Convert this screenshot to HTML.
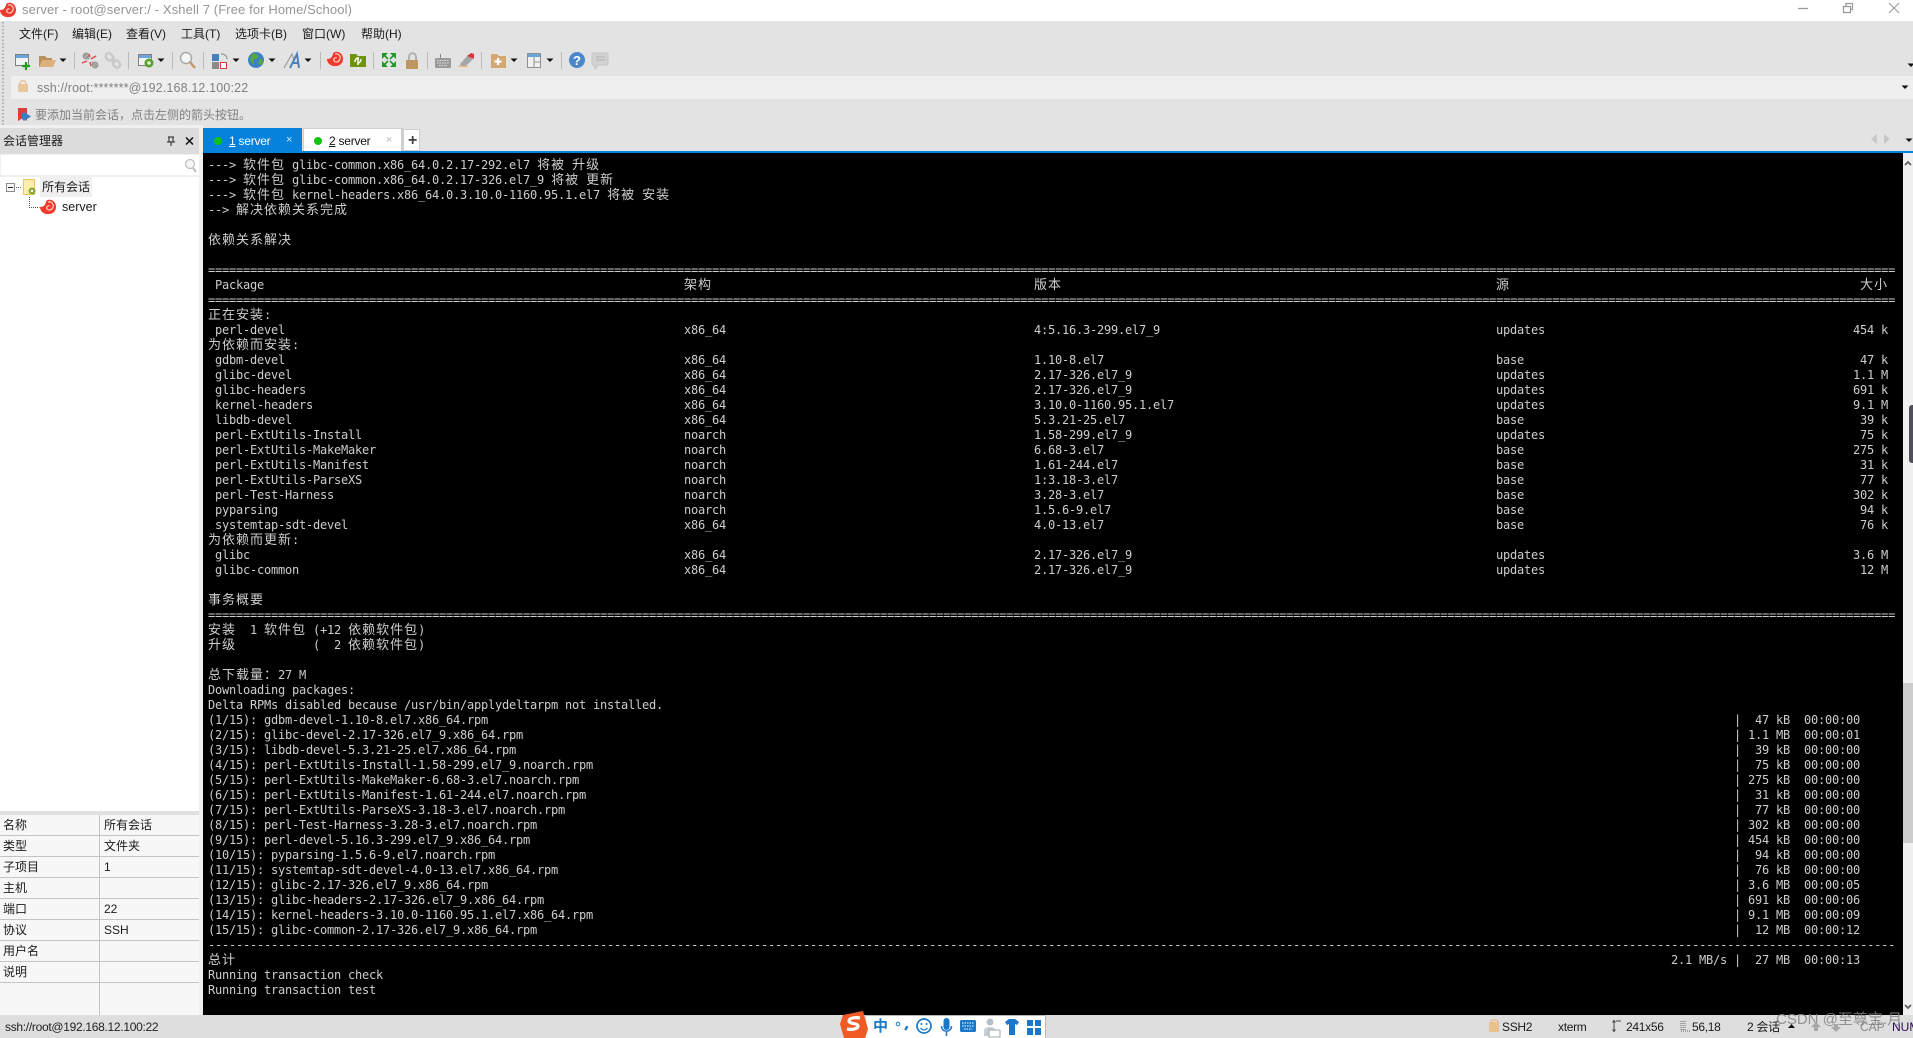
<!DOCTYPE html>
<html lang="zh"><head><meta charset="utf-8"><title>Xshell 7</title>
<style>
html,body{margin:0;padding:0;background:#e3e3e3}
body{width:1913px;height:1038px;position:relative;overflow:hidden;font:12px/16px "Liberation Sans","Noto Sans CJK SC",sans-serif;color:#1a1a1a}
.b{position:absolute}
.t{position:absolute;white-space:pre;line-height:16px}
.st{letter-spacing:-.3px}
#term{position:absolute;left:203px;top:153px;width:1700px;height:862px;background:#000;overflow:hidden}
#rows{position:absolute;left:5px;top:5px;width:1687px;font:12px/15px "DejaVu Sans Mono",monospace;letter-spacing:-.224px;color:#cdcdcd}
.r{position:relative;height:15px;white-space:pre;width:1687px}
.e{overflow:hidden}
.r i{font:13px/0 "Noto Sans CJK SC",sans-serif;letter-spacing:1px}
.r span{position:absolute;top:0}
.a{left:476px}.v{left:826px}.s{left:1288px}.z{right:7px}.p{left:1526px}
.kv{position:absolute;left:0;width:199px;height:20px;border-bottom:1px solid #c4c4c4;background:#f7f7f7}
.kv b{position:absolute;font-weight:normal;left:3px;top:2px}
.kv em{position:absolute;font-style:normal;left:104px;top:2px}
</style></head><body>
<!-- title bar -->
<div class="b" style="left:0;top:0;width:1913px;height:21px;background:#fff"></div>
<div class="t" style="left:22px;top:2px;font-size:13px;letter-spacing:.11px;color:#959595">server - root@server:/ - Xshell 7 (Free for Home/School)</div>
<!-- menu -->
<div class="t" style="left:19px;top:26px">文件(F)</div>
<div class="t" style="left:72px;top:26px">编辑(E)</div>
<div class="t" style="left:126px;top:26px">查看(V)</div>
<div class="t" style="left:181px;top:26px">工具(T)</div>
<div class="t" style="left:235px;top:26px">选项卡(B)</div>
<div class="t" style="left:302px;top:26px">窗口(W)</div>
<div class="t" style="left:361px;top:26px">帮助(H)</div>
<!-- address -->
<div class="b" style="left:11px;top:76px;width:1902px;height:23px;background:#efefef"></div>
<div class="t" style="left:37px;top:80px;font-size:12.5px;letter-spacing:.15px;color:#808080">ssh://root:*******@192.168.12.100:22</div>
<div class="t" style="left:35px;top:107px;color:#808080">要添加当前会话，点击左侧的箭头按钮。</div>
<!-- sidebar -->
<div class="b" style="left:0;top:125px;width:203px;height:890px;background:#f0f0f0"></div>
<div class="b" style="left:0;top:128px;width:199px;height:26px;background:#dcdcdc"></div>
<div class="t" style="left:3px;top:133px">会话管理器</div>
<div class="b" style="left:1px;top:155px;width:198px;height:20px;background:#fff"></div>
<div class="b" style="left:0;top:177px;width:199px;height:634px;background:#fff"></div>
<div class="b" style="left:40px;top:177px;width:52px;height:20px;background:#f0f0f0"></div>
<div class="t" style="left:42px;top:179px">所有会话</div>
<div class="t" style="left:62px;top:199px;font-size:12.5px">server</div>
<!-- properties -->
<div class="b" style="left:0;top:811px;width:199px;height:4px;background:#e0e0e0"></div>
<div class="b" style="left:0;top:815px;width:199px;height:200px;background:#f7f7f7"></div>
<div class="kv" style="top:815px"><b>名称</b><em>所有会话</em></div>
<div class="kv" style="top:836px"><b>类型</b><em>文件夹</em></div>
<div class="kv" style="top:857px"><b>子项目</b><em>1</em></div>
<div class="kv" style="top:878px"><b>主机</b></div>
<div class="kv" style="top:899px"><b>端口</b><em>22</em></div>
<div class="kv" style="top:920px"><b>协议</b><em>SSH</em></div>
<div class="kv" style="top:941px"><b>用户名</b></div>
<div class="kv" style="top:962px"><b>说明</b></div>
<div class="b" style="left:99px;top:815px;width:1px;height:200px;background:#c4c4c4"></div>
<!-- tabs -->
<div class="b" style="left:203px;top:128px;width:99px;height:23px;background:#0681dc"></div>
<div class="b" style="left:303px;top:128px;width:97px;height:22px;background:#fff;border:solid #cfcfcf;border-width:1px 2px 1px 1px"></div>
<div class="b" style="left:403px;top:129px;width:15px;height:20px;background:#fff;border:1px solid #cfcfcf"></div>
<div class="t" style="left:229px;top:133px;color:#fff;letter-spacing:-.25px"><u>1</u> server</div>
<div class="t" style="left:329px;top:133px;color:#111;letter-spacing:-.25px"><u>2</u> server</div>
<div class="t" style="left:286px;top:132px;color:#cfe6f8;font-size:11px">×</div>
<div class="t" style="left:386px;top:132px;color:#bdbdbd;font-size:11px">×</div>
<div class="t" style="left:408px;top:133px;color:#444;font-size:16px;font-weight:bold">+</div>
<div class="b" style="left:203px;top:151px;width:1710px;height:2px;background:#0681dc"></div>
<!-- terminal -->
<div id="term"><div id="rows">
<div class="r">---&gt; <i>软件包</i> glibc-common.x86_64.0.2.17-292.el7 <i>将被</i> <i>升级</i></div>
<div class="r">---&gt; <i>软件包</i> glibc-common.x86_64.0.2.17-326.el7_9 <i>将被</i> <i>更新</i></div>
<div class="r">---&gt; <i>软件包</i> kernel-headers.x86_64.0.3.10.0-1160.95.1.el7 <i>将被</i> <i>安装</i></div>
<div class="r">--&gt; <i>解决依赖关系完成</i></div>
<div class="r"></div>
<div class="r"><i>依赖关系解决</i></div>
<div class="r"></div>
<div class="r e">==================================================================================================================================================================================================================================================================</div>
<div class="r"> Package<span class="a"><i>架构</i></span><span class="v"><i>版本</i></span><span class="s"><i>源</i></span><span class="z"><i>大小</i></span></div>
<div class="r e">==================================================================================================================================================================================================================================================================</div>
<div class="r"><i>正在安装</i>:</div>
<div class="r"> perl-devel<span class="a">x86_64</span><span class="v">4:5.16.3-299.el7_9</span><span class="s">updates</span><span class="z">454 k</span></div>
<div class="r"><i>为依赖而安装</i>:</div>
<div class="r"> gdbm-devel<span class="a">x86_64</span><span class="v">1.10-8.el7</span><span class="s">base</span><span class="z">47 k</span></div>
<div class="r"> glibc-devel<span class="a">x86_64</span><span class="v">2.17-326.el7_9</span><span class="s">updates</span><span class="z">1.1 M</span></div>
<div class="r"> glibc-headers<span class="a">x86_64</span><span class="v">2.17-326.el7_9</span><span class="s">updates</span><span class="z">691 k</span></div>
<div class="r"> kernel-headers<span class="a">x86_64</span><span class="v">3.10.0-1160.95.1.el7</span><span class="s">updates</span><span class="z">9.1 M</span></div>
<div class="r"> libdb-devel<span class="a">x86_64</span><span class="v">5.3.21-25.el7</span><span class="s">base</span><span class="z">39 k</span></div>
<div class="r"> perl-ExtUtils-Install<span class="a">noarch</span><span class="v">1.58-299.el7_9</span><span class="s">updates</span><span class="z">75 k</span></div>
<div class="r"> perl-ExtUtils-MakeMaker<span class="a">noarch</span><span class="v">6.68-3.el7</span><span class="s">base</span><span class="z">275 k</span></div>
<div class="r"> perl-ExtUtils-Manifest<span class="a">noarch</span><span class="v">1.61-244.el7</span><span class="s">base</span><span class="z">31 k</span></div>
<div class="r"> perl-ExtUtils-ParseXS<span class="a">noarch</span><span class="v">1:3.18-3.el7</span><span class="s">base</span><span class="z">77 k</span></div>
<div class="r"> perl-Test-Harness<span class="a">noarch</span><span class="v">3.28-3.el7</span><span class="s">base</span><span class="z">302 k</span></div>
<div class="r"> pyparsing<span class="a">noarch</span><span class="v">1.5.6-9.el7</span><span class="s">base</span><span class="z">94 k</span></div>
<div class="r"> systemtap-sdt-devel<span class="a">x86_64</span><span class="v">4.0-13.el7</span><span class="s">base</span><span class="z">76 k</span></div>
<div class="r"><i>为依赖而更新</i>:</div>
<div class="r"> glibc<span class="a">x86_64</span><span class="v">2.17-326.el7_9</span><span class="s">updates</span><span class="z">3.6 M</span></div>
<div class="r"> glibc-common<span class="a">x86_64</span><span class="v">2.17-326.el7_9</span><span class="s">updates</span><span class="z">12 M</span></div>
<div class="r"></div>
<div class="r"><i>事务概要</i></div>
<div class="r e">==================================================================================================================================================================================================================================================================</div>
<div class="r"><i>安装</i>  1 <i>软件包</i> (+12 <i>依赖软件包</i>)</div>
<div class="r"><i>升级</i>           (  2 <i>依赖软件包</i>)</div>
<div class="r"></div>
<div class="r"><i>总下载量：</i>27 M</div>
<div class="r">Downloading packages:</div>
<div class="r">Delta RPMs disabled because /usr/bin/applydeltarpm not installed.</div>
<div class="r">(1/15): gdbm-devel-1.10-8.el7.x86_64.rpm<span class="p">|  47 kB  00:00:00</span></div>
<div class="r">(2/15): glibc-devel-2.17-326.el7_9.x86_64.rpm<span class="p">| 1.1 MB  00:00:01</span></div>
<div class="r">(3/15): libdb-devel-5.3.21-25.el7.x86_64.rpm<span class="p">|  39 kB  00:00:00</span></div>
<div class="r">(4/15): perl-ExtUtils-Install-1.58-299.el7_9.noarch.rpm<span class="p">|  75 kB  00:00:00</span></div>
<div class="r">(5/15): perl-ExtUtils-MakeMaker-6.68-3.el7.noarch.rpm<span class="p">| 275 kB  00:00:00</span></div>
<div class="r">(6/15): perl-ExtUtils-Manifest-1.61-244.el7.noarch.rpm<span class="p">|  31 kB  00:00:00</span></div>
<div class="r">(7/15): perl-ExtUtils-ParseXS-3.18-3.el7.noarch.rpm<span class="p">|  77 kB  00:00:00</span></div>
<div class="r">(8/15): perl-Test-Harness-3.28-3.el7.noarch.rpm<span class="p">| 302 kB  00:00:00</span></div>
<div class="r">(9/15): perl-devel-5.16.3-299.el7_9.x86_64.rpm<span class="p">| 454 kB  00:00:00</span></div>
<div class="r">(10/15): pyparsing-1.5.6-9.el7.noarch.rpm<span class="p">|  94 kB  00:00:00</span></div>
<div class="r">(11/15): systemtap-sdt-devel-4.0-13.el7.x86_64.rpm<span class="p">|  76 kB  00:00:00</span></div>
<div class="r">(12/15): glibc-2.17-326.el7_9.x86_64.rpm<span class="p">| 3.6 MB  00:00:05</span></div>
<div class="r">(13/15): glibc-headers-2.17-326.el7_9.x86_64.rpm<span class="p">| 691 kB  00:00:06</span></div>
<div class="r">(14/15): kernel-headers-3.10.0-1160.95.1.el7.x86_64.rpm<span class="p">| 9.1 MB  00:00:09</span></div>
<div class="r">(15/15): glibc-common-2.17-326.el7_9.x86_64.rpm<span class="p">|  12 MB  00:00:12</span></div>
<div class="r e">------------------------------------------------------------------------------------------------------------------------------------------------------------------------------------------------------------------------------------------------------------------</div>
<div class="r"><i>总计</i><span style="left:1463px">2.1 MB/s |  27 MB  00:00:13</span></div>
<div class="r">Running transaction check</div>
<div class="r">Running transaction test</div>
</div></div>
<!-- scrollbar -->
<div class="b" style="left:1903px;top:153px;width:10px;height:862px;background:#f0f0f0"></div>
<div class="b" style="left:1903px;top:683px;width:10px;height:160px;background:#cdcdcd"></div>
<div class="b" style="left:1909px;top:405px;width:4px;height:58px;background:#50505a;border-radius:3px 0 0 3px"></div>
<!-- status bar -->
<div class="b" style="left:0;top:1015px;width:1913px;height:23px;background:#dedede"></div>
<div class="t st" style="left:5px;top:1019px;color:#222">ssh://root@192.168.12.100:22</div>
<div class="t st" style="left:1502px;top:1019px">SSH2</div>
<div class="t st" style="left:1558px;top:1019px">xterm</div>
<div class="t st" style="left:1626px;top:1019px">241x56</div>
<div class="t st" style="left:1692px;top:1019px">56,18</div>
<div class="t st" style="left:1747px;top:1019px">2 会话</div>
<div class="t" style="left:1860px;top:1019px;color:#8a8a8a">CAP</div>
<div class="t" style="left:1892px;top:1019px;color:#2a0a50">NUM</div>
<div class="t" style="left:1776px;top:1010px;font-size:15px;line-height:20px;color:rgba(130,130,130,.85)">CSDN @至尊宝.月</div>
<!-- IME -->
<div class="b" style="left:866px;top:1015px;width:179px;height:22px;background:#fff;border:solid #b8b8b8;border-width:1px 1px 0 0"></div>
<div class="t" style="left:873px;top:1019px;font-size:15px;color:#1a78c8;font-weight:bold">中</div>
<!-- icons -->
<svg class="b" style="left:0;top:0" width="1913" height="1038" viewBox="0 0 1913 1038" xmlns="http://www.w3.org/2000/svg">
<defs><g id="caret"><path d="M-3.500-1.500h7L0 2z" fill="#111"/></g>
<g id="swirl"><path d="M16 8C16 3 12 0 8 1 7 1 6 2 6 3 5 6 4 8 0 8 0 12 4 16 9 15 13 15 16 12 16 8z" fill="#ee3b2d"/><path d="M8 3C11 2 14 5 13 8 12 11 9 12 7 10 6 8 8 6 9.500 7" fill="none" stroke="#fbd2cc" stroke-width="1.200"/></g></defs>
<!-- title logo -->
<use href="#swirl" x="0" y="2"/>
<!-- window buttons -->
<path d="M1798 8.500h10" stroke="#999" stroke-width="1.300"/>
<path d="M1843.500 6.500h7v6h-7zM1846 6.500v-3h6.500v6h-2" fill="none" stroke="#999" stroke-width="1.200"/>
<path d="M1889 3l10 10M1899 3l-10 10" stroke="#999" stroke-width="1"/>
<!-- grip -->
<path d="M3 22V125" stroke="#b0b0b0" stroke-width="2" stroke-dasharray="1.500 2"/>
<!-- separators -->
<g stroke="#bcbcbc" stroke-width="1"><path d="M74.500 52v17M128.500 52v17M172.500 52v17M203.500 52v17M320.500 52v17M373.500 52v17M427.500 52v17M481.500 52v17M561.500 52v17"/></g>
<!-- new session -->
<rect x="15.500" y="54.500" width="13" height="11" fill="#f2f2f2" stroke="#808080"/><rect x="16" y="55" width="12" height="3" fill="#6ba4dc"/><path d="M26 62v8M22 66h8" stroke="#1ea01e" stroke-width="2.200"/>
<!-- open folder -->
<path d="M39 56h6l2 2h5v2H44l-3 7h-2z" fill="#b98f5a"/><path d="M42 60h14l-3 7H39z" fill="#dbb07c"/>
<use href="#caret" x="63" y="60"/>
<!-- disconnect -->
<g fill="none" stroke="#9c9c9c" stroke-width="2"><path d="M84 54l5 5M92 62l5 5"/><circle cx="86" cy="56" r="2.500"/><circle cx="95" cy="65" r="2.500"/></g><path d="M82 63l5-2M91 59l5-3M89 54l1 3M90 62l1 4" stroke="#e0434a" stroke-width="1.400"/>
<!-- link -->
<g fill="none" stroke="#c9c9c9" stroke-width="2.400"><rect x="105.500" y="54" width="8" height="6" rx="3" transform="rotate(45 109.500 57)"/><rect x="112.500" y="61" width="8" height="6" rx="3" transform="rotate(45 116.500 64)"/><path d="M111 59l4 4"/></g>
<!-- props -->
<rect x="138.500" y="54.500" width="13" height="11" fill="#f2f2f2" stroke="#808080"/><rect x="139" y="55" width="12" height="3" fill="#6ba4dc"/><circle cx="149" cy="63" r="4.500" fill="#57a02b"/><circle cx="149" cy="63" r="1.800" fill="#e8f3dc"/>
<use href="#caret" x="161" y="60"/>
<!-- search -->
<circle cx="186" cy="58" r="5.500" fill="#f6f6f6" stroke="#a8a8a8" stroke-width="1.500"/><path d="M190 62l5 6" stroke="#c09a6a" stroke-width="2.500"/>
<!-- layout -->
<rect x="212" y="54" width="7" height="7" fill="#4a7fbe"/><rect x="212" y="62" width="7" height="7" fill="#8a8a8a"/><rect x="220.500" y="62.500" width="6" height="6" fill="#fff" stroke="#d43a3a"/><path d="M221 54c4 0 6 2 6 5" fill="none" stroke="#9a9a9a" stroke-width="1.200"/>
<use href="#caret" x="236" y="60"/>
<!-- globe -->
<circle cx="256" cy="60" r="8" fill="#3d80c8"/><path d="M252 54c3-1 5 0 6 2s-1 3-3 3-2 2-1 4-2 1-3-1-1-6 1-8zM260 59c2 0 3 1 3 3s-2 3-3 3-2-1-1-3 0-3 1-3z" fill="#57a83c"/>
<use href="#caret" x="272" y="60"/>
<!-- font -->
<path d="M284 68l8-14 2 6" stroke="#9a9a9a" stroke-width="1.200" fill="none"/><path d="M290 68l7-14 2 14M292.500 63h6" fill="none" stroke="#4a80c0" stroke-width="2"/>
<use href="#caret" x="308" y="60"/>
<!-- xshell + xftp -->
<use href="#swirl" x="327" y="51"/>
<path d="M350 54h6l2 2h8v11h-16z" fill="#6f9409"/><path d="M355 62c0-3 2-4 3-4M361 59c0 3-2 4-3 4M358 57v8" fill="none" stroke="#fff" stroke-width="1.500"/>
<!-- fullscreen -->
<g fill="#1d9a2a"><path d="M382 53h6l-6 6zM396 53h-6l6 6zM382 67h6l-6-6zM396 67h-6l6-6z"/></g><path d="M384 55l4 4M394 55l-4 4M384 65l4-4M394 65l-4-4" stroke="#1d9a2a" stroke-width="1.600"/>
<!-- lock -->
<path d="M409 60v-3c0-5 7-5 7 0v3" fill="none" stroke="#b0b0b0" stroke-width="2"/><rect x="406" y="60" width="12" height="9" fill="#bf9560"/>
<!-- keyboard -->
<rect x="435" y="58" width="16" height="10" rx="1" fill="#9a9a9a"/><path d="M437 60.500h12M437 63h12M439 65.500h8" stroke="#e0e0e0" stroke-dasharray="1.500 1"/><path d="M440.500 58v-4" stroke="#8a8a8a"/>
<!-- pen -->
<path d="M460 64l8-9 5 4-8 8h-4z" fill="#a6a6a6"/><path d="M467 56l4-3 3 1v5z" fill="#d9373f"/><path d="M458 66.500h10" stroke="#efb884" stroke-width="1.200"/>
<!-- folder plus -->
<path d="M491 54h6l2 2h7v12h-15z" fill="#d4a872"/><path d="M498 58v7M494.500 61.500h7" stroke="#fff" stroke-width="2.200"/>
<use href="#caret" x="514" y="60"/>
<!-- table -->
<rect x="527.500" y="53.500" width="13" height="14" fill="#f0f0f0" stroke="#909090"/><rect x="528" y="54" width="12" height="3" fill="#6ba4dc"/><path d="M534 57v10M534 62h6" stroke="#909090"/>
<use href="#caret" x="550" y="60"/>
<!-- help + chat -->
<circle cx="577" cy="60" r="8" fill="#4c87cc"/><text x="577" y="65" text-anchor="middle" font-family="Liberation Sans" font-weight="bold" font-size="13" fill="#fff">?</text>
<path d="M593 53h14a1 1 0 0 1 1 1v10a1 1 0 0 1-1 1h-9l-3 4v-4h-2a1 1 0 0 1-1-1V54a1 1 0 0 1 1-1z" fill="#d2d2d2" stroke="#c4c4c4"/><path d="M596 57h9M596 60h9" stroke="#b8b8b8" stroke-width="1.300"/>
<!-- right carets / addr -->
<use href="#caret" x="1911" y="65"/><use href="#caret" x="1905" y="87"/><use href="#caret" x="1909" y="140"/>
<path d="M1877 134v10l-6-5zM1884 134v10l6-5z" fill="#c8c8c8"/>
<!-- address lock -->
<path d="M20 84v-1c0-3 6-3 6 0v1" fill="none" stroke="#e9c79c" stroke-width="1.600"/><rect x="18" y="84" width="10" height="8" rx="1" fill="#e9c79c"/>
<!-- bookmark -->
<path d="M18 108h9v13l-4-3-5 3z" fill="#e23b3f"/><path d="M24 112l7 4.500-7 4.500-2-2v-5z" fill="#3e7fc4"/>
<!-- sidebar head -->
<path d="M168 137h6M169 137v5h4v-5M167 142h8M171 142v4" stroke="#222" fill="none"/>
<path d="M186 137.500l7 7M193 137.500l-7 7" stroke="#111" stroke-width="1.500"/>
<circle cx="190" cy="164" r="4.500" fill="#f6f6f6" stroke="#c0c0c0" stroke-width="1.300"/><path d="M193 168l3 4" stroke="#c0c0c0" stroke-width="2"/>
<!-- tree -->
<rect x="6.500" y="183.500" width="8" height="8" fill="#f5f5f5" stroke="#8a8a8a"/><path d="M8 187.500h5" stroke="#223"/>
<path d="M16 187.500h6M29.500 197v10.500h10" stroke="#555" stroke-dasharray="1 1" fill="none"/>
<rect x="23.500" y="179.500" width="11" height="15" fill="#fdeeaa" stroke="#e8c65c"/><circle cx="32" cy="191" r="3.500" fill="#8ba83a"/><circle cx="32" cy="191" r="1.200" fill="#fff"/>
<use href="#swirl" x="40" y="199"/>
<!-- tab dots -->
<circle cx="218" cy="141" r="4" fill="#12c312"/><circle cx="318" cy="141" r="4" fill="#12c312"/>
<!-- scroll arrows -->
<path d="M1905 165l3-3 3 3M1905 1005l3 3 3-3" fill="none" stroke="#606060" stroke-width="1.800"/>
<!-- status -->
<path d="M1491 1023v-1c0-3 7-3 7 0v1" fill="none" stroke="#e9c18e" stroke-width="1.500"/><rect x="1489" y="1022" width="10" height="10" rx="1.500" fill="#e9c18e"/>
<path d="M1614 1021v10M1612.500 1022.500l1.500-2 1.500 2M1612.500 1029.500l1.500 2 1.500-2M1616 1021h5" stroke="#444" fill="none"/>
<path d="M1681 1021v9M1683 1021v9M1685 1021v9M1681 1031h9" stroke="#666" stroke-dasharray="1 1" fill="none"/>
<path d="M1788 1028h7l-3.500-4z" fill="#111"/>
<path d="M1816 1022l-5 5h3v4h4v-4h3zM1836 1032l-5-5h3v-3h4v3h3z" fill="#a8a8a8"/>
<!-- IME -->
<path d="M843 1015l20-4 5 18-3 9h-21l-4-14z" fill="#f15a24"/>
<path d="M860 1018c-5-1-11 0-11 3s9 2 9 5-6 4-11 3" fill="none" stroke="#fff" stroke-width="3.200"/>
<circle cx="898" cy="1024" r="1.800" fill="none" stroke="#1a78c8"/><path d="M907 1026c0 2-1 3-2 4" stroke="#1a78c8" stroke-width="2.200" fill="none"/>
<circle cx="924" cy="1026" r="7" fill="none" stroke="#1a78c8" stroke-width="1.700"/><circle cx="921.500" cy="1024" r="1" fill="#1a78c8"/><circle cx="926.500" cy="1024" r="1" fill="#1a78c8"/><path d="M920.500 1028c2 2.500 5 2.500 7 0" stroke="#1a78c8" fill="none" stroke-width="1.200"/>
<rect x="943.500" y="1018" width="6" height="12" rx="3" fill="#1a78c8"/><path d="M941.500 1026c0 7 10 7 10 0M946.500 1032v4" fill="none" stroke="#1a78c8" stroke-width="1.500"/>
<rect x="960" y="1020" width="16" height="12" rx="1.500" fill="#1a78c8"/><path d="M962 1023h12M962 1026h12M964 1029h8" stroke="#fff" stroke-dasharray="1.500 1"/>
<circle cx="990" cy="1022" r="3.500" fill="#b4c0ca"/><path d="M984 1036v-5c0-3 3-4 6-4s5 1 5 3v6z" fill="#c4ced6"/><rect x="989" y="1030" width="11" height="7" fill="#fff" stroke="#9aa"/>
<path d="M1009 1019h6l4 3-2 3-2-1v11h-6v-11l-2 1-2-3z" fill="#1a78c8"/>
<path d="M1027 1020h6v6h-6zM1035 1020h6v6h-6zM1027 1028h6v7h-6zM1035 1028h6v7h-6z" fill="#1a78c8"/>
</svg>
</body></html>
